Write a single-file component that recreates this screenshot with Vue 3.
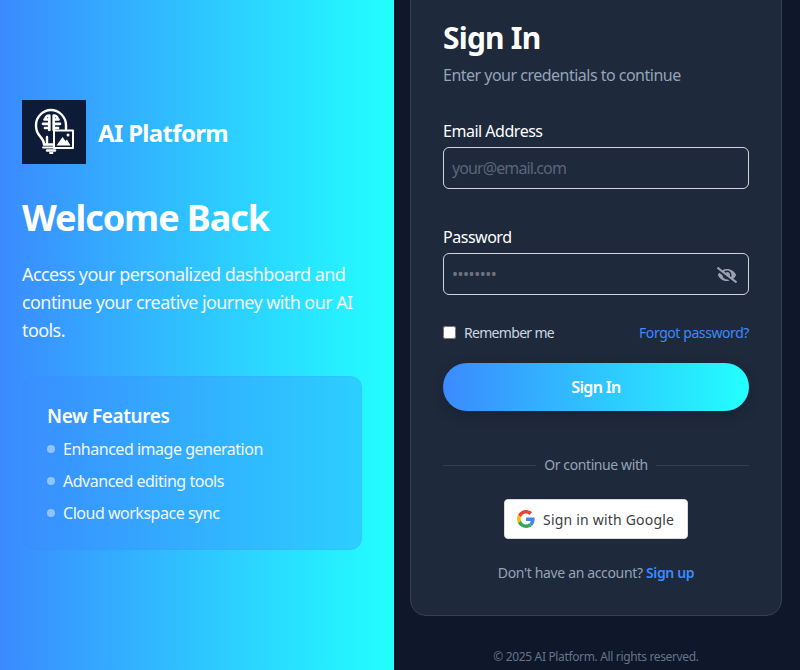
<script setup>
const features = ['Enhanced image generation', 'Advanced editing tools', 'Cloud workspace sync']
</script>

<template>
  <div class="page">
    <section class="hero">
      <div class="brand">
        <div class="logo">
          <svg viewBox="0 0 64 64" width="64" height="64" fill="none" stroke="#fff" stroke-width="2.4" stroke-linecap="round" stroke-linejoin="round">
            <path d="M22 44 C22 40 19 38 17 35 C15 32.5 14 29 14 25 C14 17 21 10 29 10 C37 10 44 17 44 25 V29" />
            <path d="M22 44.5 H32" />
            <path d="M25 37 V44" />
            <path d="M21 47.5 H42" stroke-width="1.8" />
            <path d="M25 50.5 H33" stroke-width="2.4" />
            <path d="M28 53 H30.5" stroke-width="1.8" />
            <path stroke-width="2.7" d="M27.3 15.5 V30 M31.7 15.5 V30 M27.3 15.5 C25 15.5 23.5 17 23.5 18.5 M31.7 15.5 C34 15.5 35.5 17 35.5 18.5 M27.3 19.5 H22.5 M31.7 19.5 H36.5 M27.3 23.8 H21 M31.7 23.8 H38 M27.3 28 H23 M31.7 28 H36" />
            <rect x="32" y="30.5" width="19" height="17.5" fill="#0d1b36" stroke-width="2" />
            <path d="M34.5 45.5 L40.5 37 L43.5 41 L45 39.5 L48.5 45.5 Z" fill="#fff" stroke="none" />
            <circle cx="46" cy="35" r="1.5" fill="#fff" stroke="none" />
          </svg>
        </div>
        <span class="brand-name">AI Platform</span>
      </div>
      <h1>Welcome Back</h1>
      <p class="lead">Access your personalized dashboard and continue your creative journey with our AI tools.</p>
      <div class="features">
        <h3>New Features</h3>
        <ul>
          <li v-for="f in features" :key="f"><i class="dot"></i>{{ f }}</li>
        </ul>
      </div>
    </section>

    <section class="side">
      <div class="card">
        <h2>Sign In</h2>
        <p class="sub">Enter your credentials to continue</p>

        <label class="field-label" for="email">Email Address</label>
        <input id="email" class="input" type="email" placeholder="your@email.com" />

        <label class="field-label second" for="pw">Password</label>
        <div class="pw-wrap">
          <input id="pw" class="input" type="text" placeholder="••••••••" />
          <svg class="eye" viewBox="0 0 640 512" width="20" height="16" fill="#9ca3af">
            <path d="M320 400c-75.85 0-137.25-58.71-142.9-133.11L72.2 185.82c-13.79 17.3-26.48 35.59-36.72 55.59a32.35 32.35 0 0 0 0 29.19C89.71 376.41 197.07 448 320 448c26.91 0 52.87-4 77.89-10.46L346 397.39a144.13 144.13 0 0 1-26 2.61zm313.82 58.1l-110.55-85.44a331.25 331.25 0 0 0 81.25-102.07 32.35 32.35 0 0 0 0-29.19C550.29 135.59 442.93 64 320 64a308.15 308.15 0 0 0-147.32 37.7L45.46 3.37A16 16 0 0 0 23 6.18L3.37 31.45A16 16 0 0 0 6.18 53.9l588.36 454.73a16 16 0 0 0 22.46-2.81l19.64-25.27a16 16 0 0 0-2.82-22.45zm-183.72-142l-39.3-30.38A94.75 94.75 0 0 0 416 256a94.76 94.76 0 0 0-121.31-92.21A47.65 47.65 0 0 1 304 192a46.64 46.64 0 0 1-1.54 10l-73.61-56.89A142.31 142.31 0 0 1 320 112a143.92 143.92 0 0 1 144 144c0 21.63-5.29 41.79-13.9 60.11z" />
          </svg>
        </div>

        <div class="row">
          <label class="remember"><input type="checkbox" /><span>Remember me</span></label>
          <a class="forgot">Forgot password?</a>
        </div>

        <button class="submit">Sign In</button>

        <div class="divider"><span>Or continue with</span></div>

        <div class="google-row">
          <button class="google">
            <svg viewBox="0 0 48 48" width="18" height="18">
              <path fill="#EA4335" d="M24 9.5c3.54 0 6.71 1.22 9.21 3.6l6.85-6.85C35.9 2.38 30.47 0 24 0 14.62 0 6.51 5.38 2.56 13.22l7.98 6.19C12.43 13.72 17.74 9.5 24 9.5z" />
              <path fill="#4285F4" d="M46.98 24.55c0-1.57-.15-3.09-.38-4.55H24v9.02h12.94c-.58 2.96-2.26 5.48-4.78 7.18l7.73 6c4.51-4.18 7.09-10.36 7.09-17.65z" />
              <path fill="#FBBC05" d="M10.53 28.59c-.48-1.45-.76-2.99-.76-4.59s.27-3.14.76-4.59l-7.98-6.19C.92 16.46 0 20.12 0 24c0 3.88.92 7.54 2.56 10.78l7.97-6.19z" />
              <path fill="#34A853" d="M24 48c6.48 0 11.93-2.13 15.89-5.81l-7.73-6c-2.15 1.45-4.92 2.3-8.16 2.3-6.26 0-11.57-4.22-13.47-9.91l-7.98 6.19C6.51 42.62 14.62 48 24 48z" />
            </svg>
            <span>Sign in with Google</span>
          </button>
        </div>

        <p class="signup">Don't have an account? <a>Sign up</a></p>
      </div>
      <p class="copyright">© 2025 AI Platform. All rights reserved.</p>
    </section>
  </div>
</template>

<style>
html, body { margin: 0; background: #0f172a; }
</style>

<style scoped>
* { box-sizing: border-box; }
.page {
  display: flex;
  width: 800px;
  height: 670px;
  overflow: hidden;
  font-family: "Noto Sans", sans-serif;
  letter-spacing: -0.48px;
  color: #fff;
}
.hero {
  width: 394px;
  flex: none;
  height: 670px;
  padding: 0 32px 20px 22px;
  display: flex;
  flex-direction: column;
  justify-content: center;
  background: linear-gradient(90deg, #3b8aff, #22ffff);
}
.brand { display: flex; align-items: center; gap: 12px; margin-bottom: 30px; }
.logo { width: 64px; height: 64px; background: #0d1b36; flex: none; }
.logo svg { display: block; }
.brand-name { font-size: 24px; font-weight: 700; letter-spacing: -0.68px; }
h1 { margin: 0 0 18px; font-size: 36px; line-height: 48px; font-weight: 700; letter-spacing: -1.06px; }
.lead { margin: 0 0 32px; font-size: 18px; line-height: 28px; letter-spacing: -0.58px; color: #f2f7ff; }
.features {
  width: 340px;
  height: 174px;
  padding: 25px 24px 0;
  border-radius: 12px;
  background: rgba(59, 138, 255, 0.36);
  border: 1px solid rgba(59, 138, 255, 0.1);
}
.features h3 { margin: 0 0 3px; font-size: 19px; line-height: 28px; font-weight: 600; letter-spacing: -0.4px; }
.features ul { margin: 0; padding: 0; list-style: none; }
.features li { display: flex; align-items: center; height: 32px; font-size: 16px; color: #f2f7ff; }
.dot { width: 8px; height: 8px; margin-right: 8px; border-radius: 50%; background: #93c5fd; }
.side {
  flex: 1;
  height: 670px;
  display: flex;
  flex-direction: column;
  justify-content: flex-end;
  align-items: flex-start;
  padding: 0 0 5px 16px;
  background: #0f172a;
}
.card {
  width: 372px;
  flex: none;
  padding: 32px 32px 32px;
  background: #1e293b;
  border: 1px solid #334155;
  border-radius: 16px;
}
h2 { margin: 1px 0 7px; font-size: 30px; line-height: 36px; font-weight: 700; letter-spacing: -0.78px; }
.sub { margin: 0 0 32px; font-size: 16px; line-height: 24px; letter-spacing: -0.51px; color: #94a3b8; }
.field-label { display: block; margin-bottom: 4px; font-size: 16px; line-height: 24px; color: #fff; }
.field-label.second { margin-top: 36px; }
.input {
  display: block;
  width: 100%;
  height: 42px;
  padding: 0 8px;
  font: inherit;
  font-size: 16px;
  letter-spacing: -0.9px;
  color: #fff;
  background: transparent;
  border: 1px solid #d1d5db;
  border-radius: 6px;
  outline: none;
}
.input::placeholder { color: #5b6577; opacity: 1; }
#pw::placeholder { color: #6b7280; letter-spacing: -0.48px; }
.pw-wrap { position: relative; }
.eye { position: absolute; right: 12px; top: 14px; }
.row { display: flex; justify-content: space-between; align-items: center; margin-top: 26px; height: 22px; font-size: 14px; }
.remember { display: flex; align-items: center; gap: 8px; color: #cbd5e1; letter-spacing: -0.69px; }
.remember input { margin: 0; width: 13px; height: 13px; }
.forgot { color: #3b8aff; letter-spacing: -0.42px; }
.submit {
  display: block;
  width: 100%;
  height: 48px;
  margin-top: 20px;
  font: inherit;
  font-size: 16px;
  font-weight: 600;
  letter-spacing: -0.65px;
  color: #fff;
  border: 0;
  border-radius: 24px;
  background: linear-gradient(90deg, #3b8aff, #22ffff);
  box-shadow: 0 4px 12px rgba(15, 23, 42, 0.4);
}
.divider { display: flex; align-items: center; gap: 8px; margin-top: 44px; font-size: 14px; line-height: 20px; letter-spacing: -0.4px; color: #94a3b8; }
.divider::before, .divider::after { content: ""; flex: 1; height: 1px; background: #334155; }
.google-row { display: flex; justify-content: center; margin-top: 24px; }
.google {
  display: flex;
  align-items: center;
  gap: 8px;
  width: 184px;
  height: 40px;
  padding: 0 12px;
  font-family: "Noto Sans", sans-serif;
  font-size: 14px;
  letter-spacing: 0.2px;
  color: #3c4043;
  background: #fff;
  border: 1px solid #dadce0;
  border-radius: 4px;
}
.signup { margin: 24px 0 0; text-align: center; font-size: 14px; line-height: 20px; letter-spacing: -0.35px; color: #94a3b8; }
.signup a { color: #3b8aff; font-weight: 600; }
.copyright { margin: 33px 0 0; width: 372px; font-size: 12px; line-height: 16px; letter-spacing: -0.35px; color: #64748b; text-align: center; }
</style>
